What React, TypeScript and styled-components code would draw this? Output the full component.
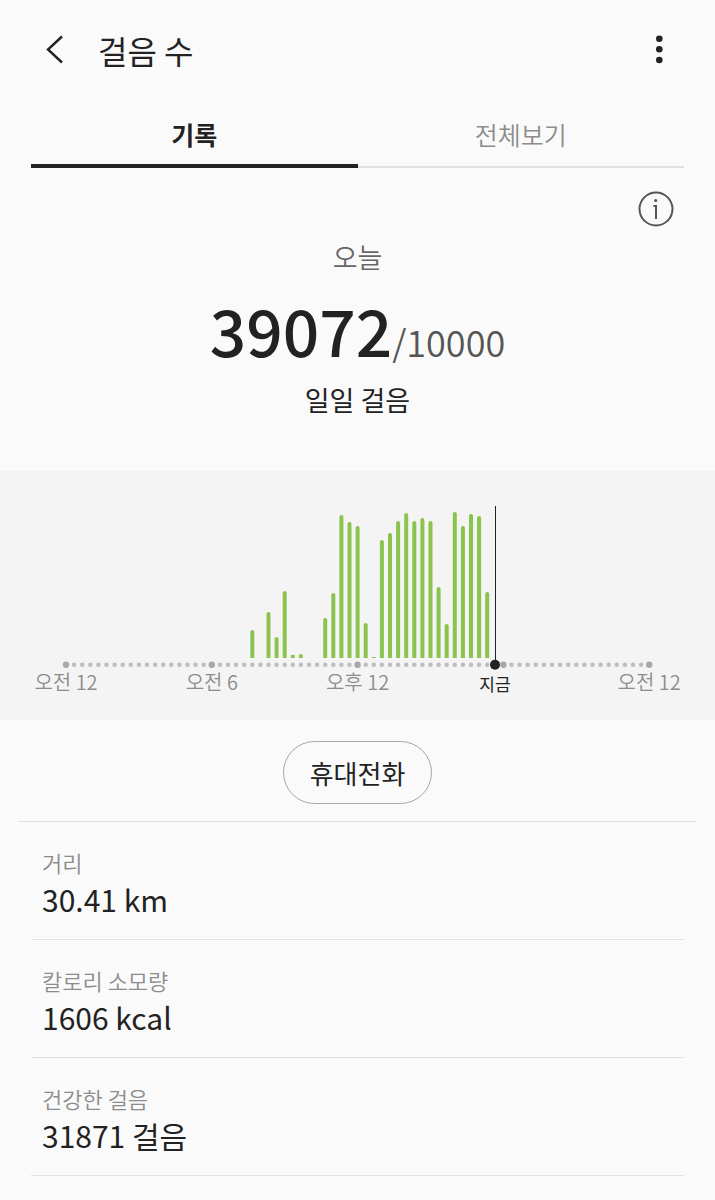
import React from 'react';
import styled, { createGlobalStyle } from 'styled-components';

const GlobalStyle = createGlobalStyle`
  * {
    box-sizing: border-box;
  }
  body {
    margin: 0;
    background: #fafafa;
    color: #222;
    font-family: 'Noto Sans CJK KR', sans-serif;
  }
  button {
    margin: 0;
    padding: 0;
    border: 0;
    background: none;
    color: inherit;
    font: inherit;
    cursor: pointer;
  }
`;

const Header = styled.header`
  display: flex;
  align-items: center;
  height: 104px;
  padding: 0 36px;
`;

const IconButton = styled.button`
  display: grid;
  place-items: center;
  width: 36px;
  height: 36px;
  svg {
    display: block;
  }
`;

const Title = styled.h1`
  flex: 1;
  margin: 0 0 0 26px;
  padding-bottom: 4px;
  font-size: 32px;
  line-height: 40px;
  font-weight: 400;
`;

const Tabs = styled.div`
  display: flex;
  align-items: flex-end;
  margin: 0 31px;
`;

const Tab = styled.button<{ $active?: boolean }>`
  && {
    flex: 1;
    height: 64px;
    padding-bottom: ${(p) => (p.$active ? 0 : 2)}px;
    border-bottom: ${(p) => (p.$active ? '4px solid #222' : '2px solid #e2e2e2')};
    color: ${(p) => (p.$active ? '#222' : '#8c8c8c')};
    font-size: 25px;
    line-height: 40px;
    font-weight: ${(p) => (p.$active ? 700 : 350)};
  }
`;

const Summary = styled.section`
  display: flex;
  flex-direction: column;
  align-items: center;
  padding: 23px 41px 51px;
`;

const InfoRow = styled.div`
  align-self: stretch;
  display: flex;
  justify-content: flex-end;
`;

const Day = styled.h2`
  margin: 10px 0 0;
  color: #666;
  font-size: 27px;
  line-height: 40px;
  font-weight: 350;
`;

const Count = styled.p`
  display: flex;
  align-items: baseline;
  margin: 16px 0 0;
  line-height: 72px;
`;

const Steps = styled.strong`
  font-size: 64px;
  font-weight: 500;
`;

const Goal = styled.span`
  color: #555;
  font-size: 36px;
  font-weight: 350;
`;

const Unit = styled.p`
  margin: 3px 0 0;
  font-size: 27px;
  line-height: 40px;
  font-weight: 400;
`;

const ChartPanel = styled.section`
  background: #f4f4f4;
  svg {
    display: block;
    width: 100%;
    height: auto;
  }
`;

const AxisLabel = styled.text<{ $now?: boolean }>`
  fill: ${(p) => (p.$now ? '#222' : '#8c8c8c')};
  font-size: ${(p) => (p.$now ? 17 : 20)}px;
  font-weight: ${(p) => (p.$now ? 400 : 350)};
  text-anchor: middle;
`;

const SourceBar = styled.div`
  display: flex;
  justify-content: center;
  margin: 0 18px;
  padding: 21px 0 17px;
  border-bottom: 1px solid #e2e2e2;
`;

const SourceButton = styled.button`
  && {
    height: 63px;
    padding: 0 26px;
    border: 1px solid #a6a6a6;
    border-radius: 32px;
    font-size: 26px;
    line-height: 40px;
  }
`;

const Stats = styled.dl`
  margin: 0 31px;
`;

const Stat = styled.div`
  height: 118px;
  padding: 24px 11px 0;
  border-bottom: 1px solid #e2e2e2;
`;

const StatName = styled.dt`
  color: #8c8c8c;
  font-size: 22px;
  line-height: 32px;
  font-weight: 350;
`;

const StatValue = styled.dd`
  margin: 0;
  font-size: 30px;
  line-height: 42px;
  font-weight: 400;
`;

/* The day axis has one dot per 20 minutes, from midnight onwards. */
const AXIS_START = 66;
const STEP = 8.1;
const SLOTS = 72;
const AXIS_Y = 193;
const BAR_BASE = 187;
const NOW_X = 495;

const slotX = (slot: number) => AXIS_START + slot * STEP;

/* [slot, bar height] */
const bars: [number, number][] = [
  [23, 28], [25, 46], [26, 21], [27, 67], [28, 3], [29, 4],
  [32, 40], [33, 65], [34, 143], [35, 136], [36, 132], [37, 35], [38, 1],
  [39, 118], [40, 125], [41, 137], [42, 145], [43, 137], [44, 140], [45, 137],
  [46, 71], [47, 34], [48, 146], [49, 132], [50, 144], [51, 142], [52, 66],
];

const axisLabels = [
  { slot: 0, text: '오전 12' },
  { slot: 18, text: '오전 6' },
  { slot: 36, text: '오후 12' },
  { slot: 72, text: '오전 12' },
];

const stats = [
  { name: '거리', value: '30.41 km' },
  { name: '칼로리 소모량', value: '1606 kcal' },
  { name: '건강한 걸음', value: '31871 걸음' },
];

function DayChart() {
  return (
    <ChartPanel>
      <svg viewBox="0 0 715 249" role="img" aria-label="시간별 걸음 수">
        {bars.map(([slot, height]) => (
          <path
            key={slot}
            fill="#8bc34f"
            d={
              height > 3
                ? `M${slotX(slot) - 2} ${BAR_BASE}v${2 - height}a2 2 0 0 1 4 0v${height - 2}z`
                : `M${slotX(slot) - 2} ${BAR_BASE}v${-height}h4v${height}z`
            }
          />
        ))}
        {Array.from({ length: SLOTS + 1 }, (_, slot) => (
          <circle
            key={slot}
            cx={slotX(slot)}
            cy={AXIS_Y + 0.7}
            r={slot % 18 === 0 ? 3.2 : 2.2}
            fill={slot % 18 === 0 ? '#a8a8a8' : '#bdbdbd'}
          />
        ))}
        <path d={`M${NOW_X + 0.5} 35V${AXIS_Y}`} stroke="#222" strokeWidth="1" />
        <circle cx={NOW_X} cy={AXIS_Y + 0.7} r="5" fill="#222" />
        {axisLabels.map(({ slot, text }) => (
          <AxisLabel key={slot} x={slotX(slot)} y={219}>
            {text}
          </AxisLabel>
        ))}
        <AxisLabel $now x={NOW_X} y={220}>
          지금
        </AxisLabel>
      </svg>
    </ChartPanel>
  );
}

export default function App() {
  return (
    <>
      <GlobalStyle />
      <Header>
        <IconButton aria-label="뒤로">
          <svg width="36" height="36" viewBox="0 0 36 36" fill="none" stroke="#222" strokeWidth="2.4">
            <path d="M26 2.500 12 15.500 26 28.500" />
          </svg>
        </IconButton>
        <Title>걸음 수</Title>
        <IconButton aria-label="더보기">
          <svg width="36" height="36" viewBox="0 0 36 36" fill="#222">
            <circle cx="16.300" cy="4.700" r="3.300" />
            <circle cx="16.300" cy="15.300" r="3.300" />
            <circle cx="16.300" cy="26" r="3.300" />
          </svg>
        </IconButton>
      </Header>
      <Tabs role="tablist">
        <Tab $active role="tab" aria-selected="true">
          기록
        </Tab>
        <Tab role="tab" aria-selected="false">
          전체보기
        </Tab>
      </Tabs>
      <main>
        <Summary>
          <InfoRow>
            <IconButton aria-label="정보">
              <svg width="36" height="36" viewBox="0 0 36 36" fill="none" stroke="#555" strokeWidth="2">
                <circle cx="18" cy="18" r="16.500" />
                <path d="M15.500 15h2.500v13" />
                <circle cx="17.700" cy="9.500" r="1.600" fill="#555" stroke="none" />
              </svg>
            </IconButton>
          </InfoRow>
          <Day>오늘</Day>
          <Count>
            <Steps>39072</Steps>
            <Goal>/10000</Goal>
          </Count>
          <Unit>일일 걸음</Unit>
        </Summary>
        <DayChart />
        <SourceBar>
          <SourceButton>휴대전화</SourceButton>
        </SourceBar>
        <Stats>
          {stats.map(({ name, value }) => (
            <Stat key={name}>
              <StatName>{name}</StatName>
              <StatValue>{value}</StatValue>
            </Stat>
          ))}
        </Stats>
      </main>
    </>
  );
}
